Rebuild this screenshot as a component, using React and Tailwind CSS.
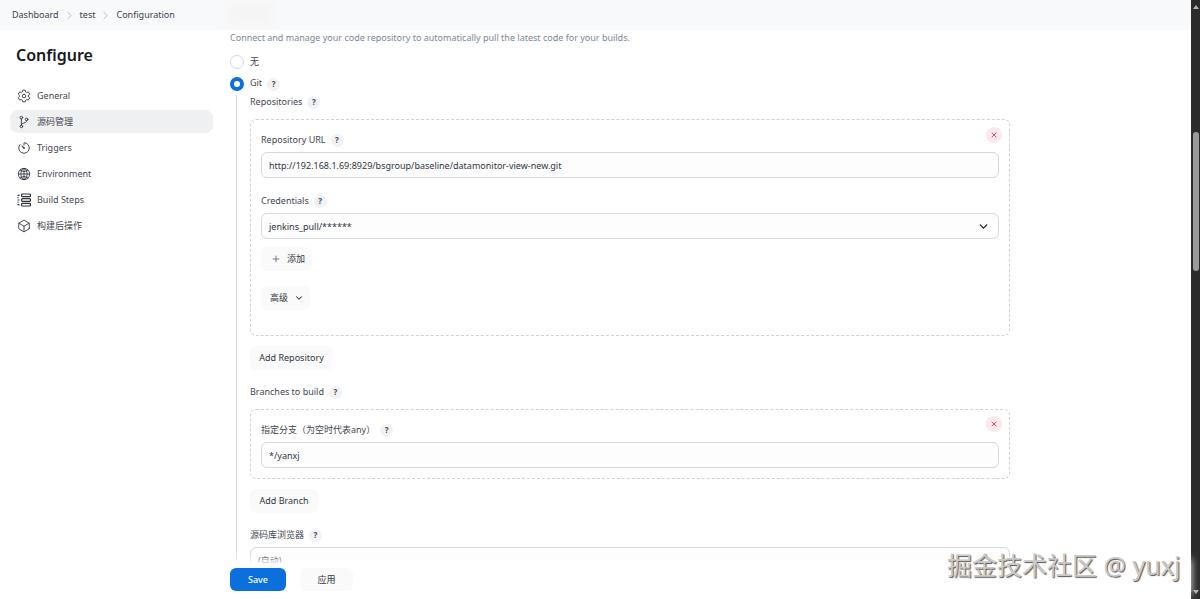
import { IoSettingsOutline, IoGitBranchOutline, IoTimerOutline, IoGlobeOutline, IoCubeOutline } from 'react-icons/io5';
import { ChevronRight, ChevronDown, Plus, X } from 'lucide-react';

const font = "font-['Noto_Sans','Noto_Sans_CJK_SC',sans-serif]";

function BuildStepsIcon({ className }) {
  return (
    <svg viewBox="0 0 14 14" fill="none" stroke="currentColor" strokeWidth="1.2" className={className}>
      <rect x="4.5" y="1" width="9" height="2.6" rx="1" />
      <rect x="4.5" y="5.7" width="9" height="2.6" rx="1" />
      <rect x="4.5" y="10.4" width="9" height="2.6" rx="1" />
      <path d="M.5 2.3h2M.5 7h2M.5 11.7h2M.5 4.6h1M.5 9.3h1" />
    </svg>
  );
}

function ScrollArrow({ className = '' }) {
  return (
    <svg viewBox="0 0 6 4" className={`h-[4px] w-[6px] shrink-0 fill-[#b5b5b5] ${className}`}>
      <path d="M3 0l3 4H0z" />
    </svg>
  );
}

const navItems = [
  { label: 'General', icon: IoSettingsOutline },
  { label: '源码管理', icon: IoGitBranchOutline, active: true },
  { label: 'Triggers', icon: IoTimerOutline },
  { label: 'Environment', icon: IoGlobeOutline },
  { label: 'Build Steps', icon: BuildStepsIcon },
  { label: '构建后操作', icon: IoCubeOutline },
];

function Help() {
  return (
    <span className="ml-[5px] flex h-[13px] w-[13px] items-center justify-center rounded-full bg-[#f1f2f3] text-[8px] font-bold text-[#444b55]">?</span>
  );
}

function Label({ children, className = '' }) {
  return (
    <div className={`flex h-[14px] items-center pb-[2px] text-[9px] text-[#3f4650] ${className}`}>
      {children}
      <Help />
    </div>
  );
}

function Field({ children, className = '' }) {
  return (
    <div className={`flex h-[26px] items-center rounded-[6px] border border-[#d6d8da] bg-[#fdfdfd] pl-[7px] pr-[8px] pt-[2px] text-[9px] text-[#2f353d] ${className}`}>
      {children}
    </div>
  );
}

function Button({ children, className = '' }) {
  return (
    <div className={`flex h-[24px] items-center rounded-[6px] bg-[#fafafb] text-[9px] text-[#30363e] ${className}`}>
      {children}
    </div>
  );
}

function Remove({ className = '' }) {
  return (
    <span className={`absolute right-[7px] flex h-[16px] w-[16px] items-center justify-center rounded-full bg-[#fbe9ee] text-[#c9365f] ${className}`}>
      <X className="h-[8px] w-[8px]" strokeWidth={2.5} />
    </span>
  );
}

export default function App() {
  return (
    <div className={`flex h-[599px] w-[1200px] overflow-hidden bg-white ${font}`}>
      <div className="relative flex min-w-0 flex-1 flex-col">
        <header className="relative flex h-[30px] shrink-0 items-center overflow-hidden bg-[#f8f9fa] pl-[12px] text-[9px] text-[#3c424b]">
          <span>Dashboard</span>
          <ChevronRight className="mx-[4px] h-[13px] w-[13px] text-[#9aa0a8]" strokeWidth={1.25} />
          <span>test</span>
          <ChevronRight className="mx-[4px] h-[13px] w-[13px] text-[#9aa0a8]" strokeWidth={1.25} />
          <span>Configuration</span>
          <span className="absolute left-[228px] top-[4px] h-[22px] w-[44px] bg-[#f5f5f6] blur-[4px]" />
        </header>

        <div className="flex min-h-0 flex-1">
          <aside className="w-[230px] shrink-0 pl-[10px]">
            <h1 className="ml-[6px] mt-[12px] h-[26px] text-[16px] font-semibold leading-[26px] text-[#14181f]">Configure</h1>
            <nav className="mt-[16px] w-[203px]">
              {navItems.map(({ label, icon: Icon, active }) => (
                <div key={label} className={`mb-[3px] flex h-[23px] items-center rounded-[8px] pl-[7px] text-[9px] text-[#3f4650] ${active ? 'bg-[#eff0f2]' : ''}`}>
                  <Icon className="h-[14px] w-[14px] text-[#2c323a]" />
                  <span className="ml-[6px]">{label}</span>
                </div>
              ))}
            </nav>
          </aside>

          <main className="min-w-0 flex-1 overflow-hidden">
            <p className="mt-[1px] h-[14px] text-[9px] leading-[14px] text-[#7b8698]">Connect and manage your code repository to automatically pull the latest code for your builds.</p>

            <div className="mt-[10px] flex h-[14px] items-center text-[9px] text-[#3f4650]">
              <span className="h-[14px] w-[14px] rounded-full border border-[#d6d8da] bg-white" />
              <span className="ml-[6px]">无</span>
            </div>
            <div className="mt-[8px] flex h-[14px] items-center text-[9px] text-[#3f4650]">
              <span className="h-[14px] w-[14px] rounded-full border-[4px] border-[#0b6fdc] bg-white" />
              <span className="ml-[6px] -translate-y-[1px]">Git</span>
              <Help />
            </div>

            <div className="ml-[6px] mt-[4px] w-[780px] border-l border-[#d9dbde] pl-[13px] pt-[1px]">
              <Label>Repositories</Label>

              <section className="relative mt-[9px] h-[217px] w-[760px] rounded-[6px] border border-dashed border-[#d0d2d5] px-[10px] pt-[14px]">
                <Remove className="top-[7px]" />
                <Label>Repository URL</Label>
                <Field className="mt-[4px]">http://192.168.1.69:8929/bsgroup/baseline/datamonitor-view-new.git</Field>
                <Label className="mt-[17px]">Credentials</Label>
                <Field className="mt-[4px] justify-between">
                  jenkins_pull/******
                  <ChevronDown className="h-[13px] w-[13px] -translate-y-[1px] text-[#22262c]" strokeWidth={2.5} />
                </Field>
                <Button className="mt-[8px] w-[51px] pl-[10px]">
                  <Plus className="h-[10px] w-[10px] text-[#4b525c]" strokeWidth={1.75} />
                  <span className="ml-[6px]">添加</span>
                </Button>
                <Button className="mt-[15px] w-[49px] pl-[9px]">
                  <span>高级</span>
                  <ChevronDown className="ml-[6px] h-[10px] w-[10px]" strokeWidth={2.5} />
                </Button>
              </section>

              <Button className="mt-[10px] w-[83px] justify-center">Add Repository</Button>

              <Label className="mt-[16px]">Branches to build</Label>

              <section className="relative mt-[9px] h-[70px] w-[760px] rounded-[6px] border border-dashed border-[#d0d2d5] px-[10px] pt-[14px]">
                <Remove className="top-[6px]" />
                <Label>指定分支（为空时代表any）</Label>
                <Field className="mt-[4px]">*/yanxj</Field>
              </section>

              <Button className="mt-[10px] w-[68px] justify-center">Add Branch</Button>

              <Label className="mt-[16px]">源码库浏览器</Label>
              <Field className="mt-[4px] w-[760px]">(自动)</Field>
            </div>
          </main>
        </div>

        <footer className="absolute bottom-0 left-0 right-0 flex h-[36px] items-start bg-white pl-[230px] pt-[5px] shadow-[0_-4px_8px_rgba(255,255,255,0.9)]">
          <div className="flex h-[23px] w-[56px] items-center justify-center rounded-[6px] bg-[#0b6fdc] text-[9px] font-medium text-white">Save</div>
          <div className="ml-[14px] flex h-[23px] w-[53px] items-center justify-center rounded-[6px] bg-[#fafafb] text-[9px] text-[#30363e]">应用</div>
        </footer>

        <span className="absolute bottom-[18px] left-[947px] whitespace-nowrap text-[25px] leading-[32px] text-[#c9c9c9] [text-shadow:1px_1px_1px_#555]">掘金技术社区 @ yuxj</span>
      </div>

      <div className="flex w-[9px] shrink-0 flex-col items-center bg-[#2b2b2b]">
        <ScrollArrow className="mt-[5px]" />
        <div className="mt-[123px] h-[139px] w-[6px] rounded-[3px] bg-[#9b9b9b]" />
        <ScrollArrow className="mb-[5px] mt-auto rotate-180" />
      </div>
    </div>
  );
}
